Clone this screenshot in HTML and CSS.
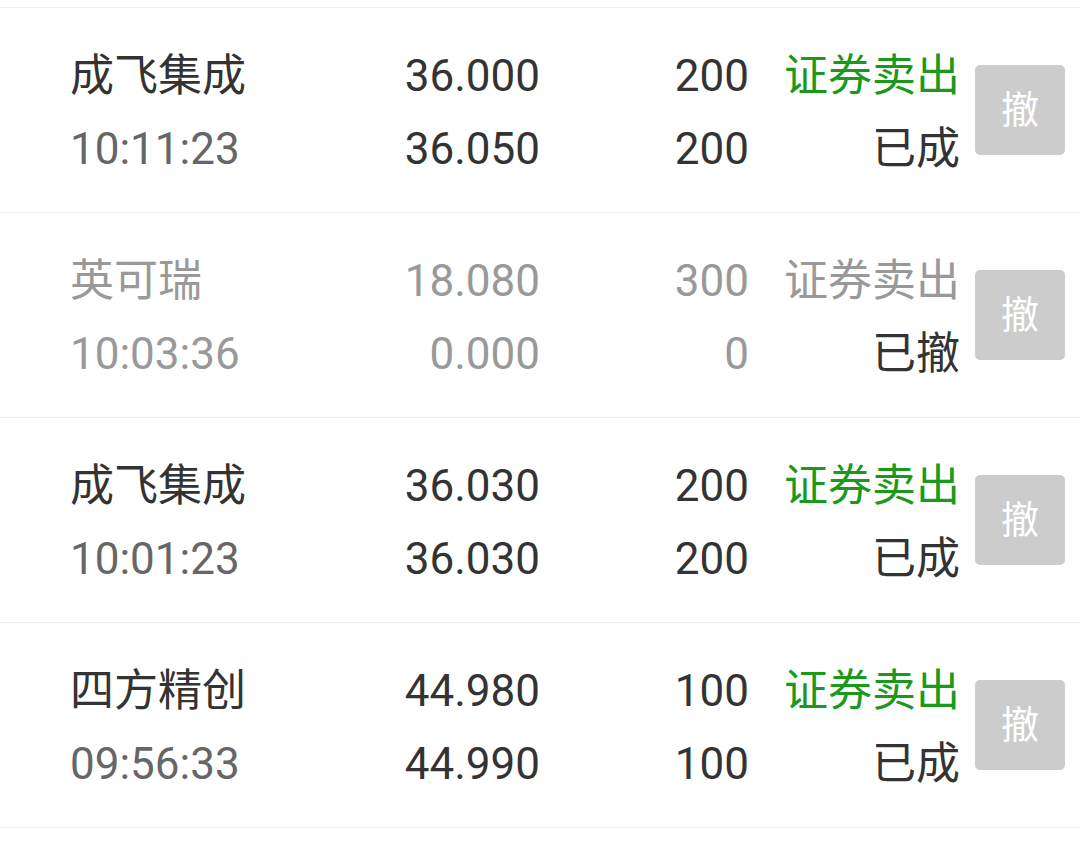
FILE: index.html
```html
<!DOCTYPE html>
<html lang="zh-CN">

<head>
  <title>委托列表</title>
  <meta charset="UTF-8">
  <link rel="stylesheet" href="styles.css">
</head>

<body>
  <div class="lista">
    <div class="linha">
      <span class="nome">成飞集成</span>
      <span class="num">36.000</span>
      <span class="num">200</span>
      <span class="tipo verde">证券卖出</span>
      <span class="btn">撤</span>
      <span class="hora">10:11:23</span>
      <span class="num">36.050</span>
      <span class="num">200</span>
      <span class="tipo">已成</span>
    </div>
    <div class="linha apagada">
      <span class="nome">英可瑞</span>
      <span class="num">18.080</span>
      <span class="num">300</span>
      <span class="tipo">证券卖出</span>
      <span class="btn">撤</span>
      <span class="hora">10:03:36</span>
      <span class="num">0.000</span>
      <span class="num">0</span>
      <span class="tipo estado">已撤</span>
    </div>
    <div class="linha">
      <span class="nome">成飞集成</span>
      <span class="num">36.030</span>
      <span class="num">200</span>
      <span class="tipo verde">证券卖出</span>
      <span class="btn">撤</span>
      <span class="hora">10:01:23</span>
      <span class="num">36.030</span>
      <span class="num">200</span>
      <span class="tipo">已成</span>
    </div>
    <div class="linha">
      <span class="nome">四方精创</span>
      <span class="num">44.980</span>
      <span class="num">100</span>
      <span class="tipo verde">证券卖出</span>
      <span class="btn">撤</span>
      <span class="hora">09:56:33</span>
      <span class="num">44.990</span>
      <span class="num">100</span>
      <span class="tipo">已成</span>
    </div>
  </div>
</body>

</html>
```

FILE: styles.css
```css
* {
  font-family: Roboto, 'Noto Sans CJK SC', sans-serif;
  margin: 0;
  padding: 0;
  box-sizing: border-box;
  color: rgb(51, 51, 51);
}

body {
  background-color: white;
  overflow: hidden;
}

.lista {
  margin-top: 7px;
  border-top: 1px solid rgb(238, 238, 238);
}

.linha {
  height: 205px;
  border-bottom: 1px solid rgb(238, 238, 238);
  padding: 6px 0 0 70px;
  display: grid;
  grid-template-columns: 231px 239px 209px 211px 105px;
  grid-template-rows: 73px 73px;
  align-content: center;
  font-size: 44px;
  line-height: 73px;
}

.linha .num,
.linha .tipo {
  text-align: right;
}

.linha .hora {
  color: rgb(102, 102, 102);
}

.linha .verde {
  color: rgb(26, 153, 26);
}

.btn {
  grid-row: 1 / 3;
  grid-column: 5;
  align-self: center;
  justify-self: end;
  width: 90px;
  height: 90px;
  margin-top: -6px;
  border-radius: 5px;
  background-color: rgb(204, 204, 204);
  color: white;
  font-size: 38px;
  line-height: 90px;
  text-align: center;
}

.apagada span,
.apagada .hora {
  color: rgb(153, 153, 153);
}

.apagada .btn {
  color: white;
}

.apagada .estado {
  color: rgb(51, 51, 51);
}
```
